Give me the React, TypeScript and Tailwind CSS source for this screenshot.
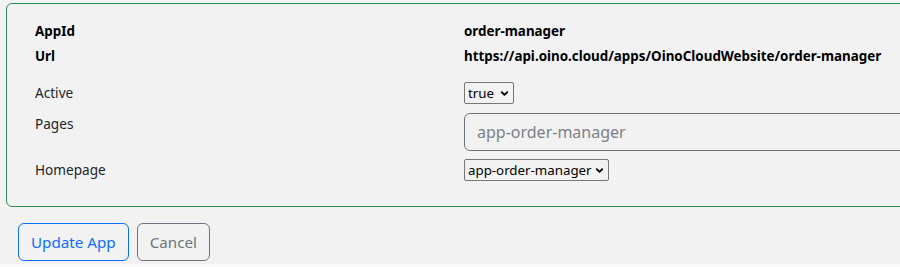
import { ChevronDown } from 'lucide-react';

const font = { fontFamily: '"Noto Sans", "Open Sans", sans-serif' };

function Select({ value, width }: { value: string; width: string }) {
  return (
    <div className={`relative h-[22px] ${width}`}>
      <select
        defaultValue={value}
        className="appearance-none w-full h-full border border-[#767676] rounded-[2px] bg-transparent pl-[3px] pr-[14px] text-[13.3px] leading-[20px] text-black outline-none"
      >
        <option value={value}>{value}</option>
      </select>
      <ChevronDown size={11} strokeWidth={4} className="pointer-events-none absolute right-[4px] top-[6px] text-black" />
    </div>
  );
}

export default function App() {
  return (
    <div className="w-[900px] h-[267px] overflow-hidden bg-[#f2f2f2] text-[#212529] flex flex-col" style={font}>
      <div className="pl-[6px] pt-[3px]">
        <div className="w-[960px] h-[204px] border border-[#2e8b57] rounded-[6px] pl-[28px] pt-[15px]">
          <div className="grid grid-cols-[429px_1fr] text-[13.4px]">
            <div className="h-[25px] leading-[25px] font-bold text-black">AppId</div>
            <div className="h-[25px] leading-[25px] font-bold text-black">order-manager</div>
            <div className="h-[25px] leading-[25px] font-bold text-black">Url</div>
            <div className="h-[25px] leading-[25px] font-bold text-black">https://api.oino.cloud/apps/OinoCloudWebsite/order-manager</div>

            <div className="mt-[13px] h-[22px] leading-[22px] text-[13.6px]">Active</div>
            <div className="mt-[13px]"><Select value="true" width="w-[50px]" /></div>

            <div className="mt-[9px] pt-[2px] h-[38px] leading-[18px] text-[13.6px]">Pages</div>
            <div className="mt-[9px]">
              <input
                placeholder="app-order-manager"
                className="w-full h-[38px] border border-[#6c757d] rounded-[6px] px-3 text-[16px] bg-transparent placeholder:text-[#7d8186] outline-none"
              />
            </div>

            <div className="mt-[8px] h-[22px] leading-[22px] text-[13.6px]">Homepage</div>
            <div className="mt-[8px]"><Select value="app-order-manager" width="w-[145px]" /></div>
          </div>
        </div>
      </div>
      <div className="flex gap-2 pl-[18px] pt-[16px]">
        <button className="h-[38px] px-3 border border-[#0d6efd] rounded-[6px] text-[15.2px] text-[#0d6efd]">Update App</button>
        <button className="h-[38px] px-3 border border-[#6c757d] rounded-[6px] text-[15.2px] text-[#6c757d]">Cancel</button>
      </div>
      <div className="mt-auto h-[3px] bg-[#fafafa]" />
    </div>
  );
}
